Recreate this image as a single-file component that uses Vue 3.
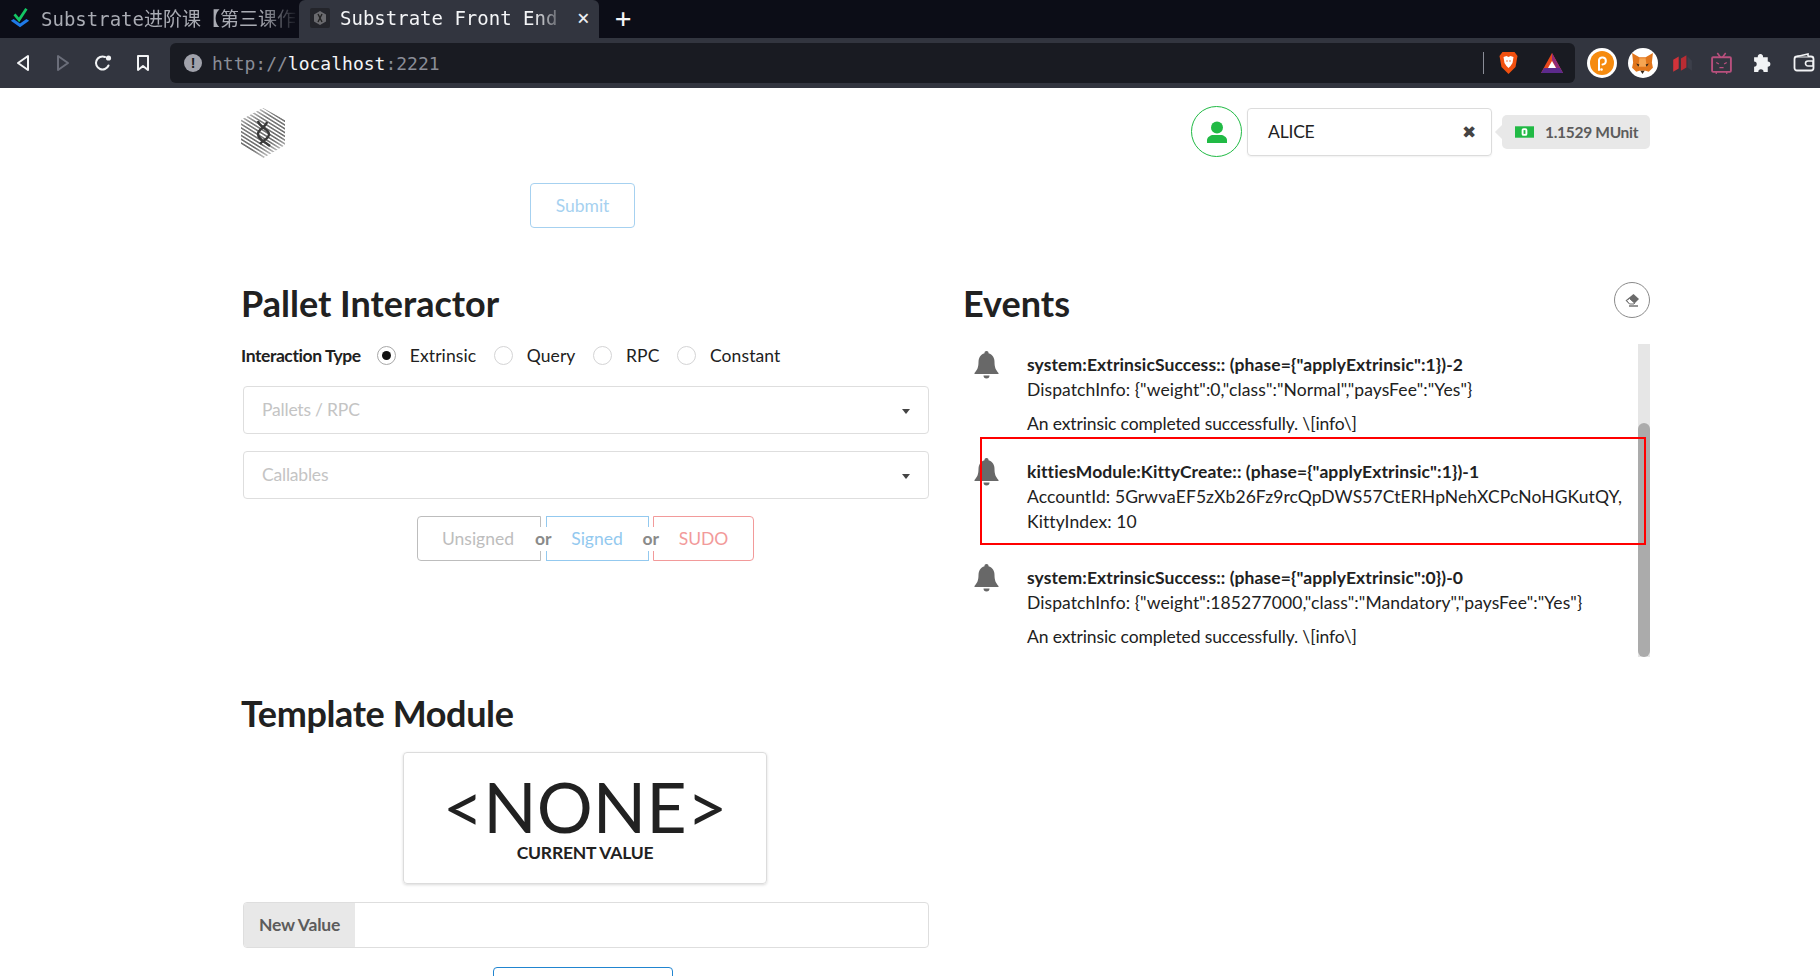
<template>
  <div class="browser">
    <div class="tabs">
      <div class="tab">
        <svg class="favicon" viewBox="0 0 24 24" width="22" height="22">
          <path d="M2 15l10 7 10-7-3-2-7 5-7-5z" fill="#1f7ae8" />
          <path d="M6 8l5 6 8-12" fill="none" stroke="#14c764" stroke-width="3" />
        </svg>
        <span class="tab-title">Substrate进阶课【第三课作</span>
      </div>
      <div class="tab active">
        <svg class="favicon" viewBox="0 0 20 20" width="20" height="20">
          <rect width="20" height="20" rx="2" fill="#24252b" />
          <path d="M10 3l6 3.500v7L10 17l-6-3.500v-7z" fill="#6a6a6e" />
          <path d="M8 6l4 8M12 6l-4 8" stroke="#222" stroke-width="1.400" />
        </svg>
        <span class="tab-title">Substrate Front End</span>
        <span class="tab-close">×</span>
      </div>
      <span class="tab-new">+</span>
    </div>
    <div class="toolbar">
      <svg class="tool" viewBox="0 0 20 20" width="20" height="20">
        <path d="M15 3v14L5 10z" fill="none" stroke="#f2f3f5" stroke-width="2" stroke-linejoin="round" />
      </svg>
      <svg class="tool" viewBox="0 0 20 20" width="20" height="20">
        <path d="M5 3v14l10-7z" fill="none" stroke="#6b6e7a" stroke-width="2" stroke-linejoin="round" />
      </svg>
      <svg class="tool" viewBox="0 0 20 20" width="20" height="20">
        <path d="M15.500 12.500A6.500 6.500 0 1 1 12 4" fill="none" stroke="#f2f3f5" stroke-width="2" stroke-linecap="round" />
        <circle cx="15.500" cy="5" r="2.600" fill="#f2f3f5" />
      </svg>
      <svg class="tool" viewBox="0 0 20 20" width="20" height="20">
        <path d="M5 3h10v14l-5-4-5 4z" fill="none" stroke="#f2f3f5" stroke-width="2" stroke-linejoin="round" />
      </svg>
      <div class="urlbar">
        <span class="info-dot">!</span>
        <span class="url"><span class="dim">http://</span>localhost<span class="dim">:2221</span></span>
        <span class="url-sep"></span>
        <svg viewBox="0 0 20 24" width="21" height="24">
          <path d="M4 1h12l3 4-2 11-7 7-7-7L1 5z" fill="#f1500f" />
          <path d="M5 6l3-1 2 1 2-1 3 1-1 6-2 3-2 2-2-2-2-3z" fill="#fff" />
          <path d="M8 10h1M11 10h1" stroke="#f1500f" stroke-width="1.400" />
        </svg>
        <svg class="bat" viewBox="0 0 24 22" width="24" height="22">
          <path d="M12 1L1 21h22z" fill="#e8481d" />
          <path d="M12 1l11 20h-4L12 8z" fill="#8f2b7a" />
          <path d="M1 21l3-5h16l3 5z" fill="#5c2a8c" />
          <path d="M12 9l4 7H8z" fill="#fff" />
        </svg>
      </div>
      <div class="extensions">
        <span class="ext"><span class="ext-circle">
          <svg viewBox="0 0 24 24" width="24" height="24">
            <circle cx="12" cy="12" r="12" fill="#f68b0f" />
            <path d="M9 19V9a3.500 3.500 0 1 1 3.500 4.500" fill="none" stroke="#fff" stroke-width="2" stroke-linecap="round" />
            <circle cx="11.500" cy="18.500" r="1.300" fill="#fff" />
          </svg>
        </span></span>
        <span class="ext"><span class="ext-circle">
          <svg viewBox="0 0 24 24" width="25" height="25">
            <path d="M2 2l7 4h6l7-4-1 9 1 5-4 4-3-1h-6l-3 1-4-4 1-5z" fill="#e2761b" />
            <path d="M9 7h6l1 8h-8z" fill="#f6a552" />
            <path d="M10 19h4l-2 3z" fill="#33261a" />
            <path d="M6 12l3 1-1 2zM18 12l-3 1 1 2z" fill="#33261a" />
          </svg>
        </span></span>
        <span class="ext ext-narrow">
          <svg viewBox="0 0 20 20" width="22" height="22">
            <path d="M2 7l5-3v11l-5 3z" fill="#d1333a" />
            <path d="M9 6l5-3v11l-5 3z" fill="#b92c33" />
            <path d="M15 4l4 4v9l-4-3z" fill="#3c3f4a" />
          </svg>
        </span>
        <span class="ext">
          <svg viewBox="0 0 22 22" width="23" height="23">
            <path d="M7 1l3 4M15 1l-3 4" stroke="#b9507e" stroke-width="1.500" />
            <rect x="2" y="5" width="18" height="14" rx="1" fill="none" stroke="#b9507e" stroke-width="1.800" />
            <path d="M6 10l2.500 1.500M16 10l-2.500 1.500M9 15h4M6 21v-2M16 21v-2" stroke="#b9507e" stroke-width="1.200" />
          </svg>
        </span>
        <span class="ext">
          <svg viewBox="0 0 20 20" width="21" height="21">
            <path d="M8 1a2.500 2.500 0 0 1 2.500 3H15v4a2.500 2.500 0 1 1 0 5v5h-4a2.500 2.500 0 1 0-5 0H2v-5a2.500 2.500 0 1 0 0-5V4h3.500A2.500 2.500 0 0 1 8 1z" fill="#f2f3f5" />
          </svg>
        </span>
        <span class="ext">
          <svg viewBox="0 0 22 20" width="22" height="20">
            <rect x="1.500" y="3.500" width="19" height="14" rx="2.500" fill="none" stroke="#f2f3f5" stroke-width="1.800" />
            <path d="M4 3.500l11-2.500v2.500M20 8h-5a2.500 2.500 0 0 0 0 5h5z" fill="#33363f" stroke="#f2f3f5" stroke-width="1.600" />
          </svg>
        </span>
      </div>
    </div>
  </div>

  <div class="page">
    <header class="top">
      <svg class="logo" viewBox="0 0 44 50" width="44" height="50">
        <defs>
          <pattern id="stripes" width="3.200" height="3.200" patternUnits="userSpaceOnUse" patternTransform="rotate(32)">
            <rect width="3.200" height="1.600" fill="#6e6e6e" />
          </pattern>
          <linearGradient id="fade" x1="0" y1="0" x2="0.400" y2="1">
            <stop offset="0" stop-color="#fff" stop-opacity="0.9" />
            <stop offset="0.35" stop-color="#fff" stop-opacity="0.1" />
            <stop offset="0.8" stop-color="#fff" stop-opacity="0" />
            <stop offset="1" stop-color="#fff" stop-opacity="0.5" />
          </linearGradient>
        </defs>
        <path d="M22 0l22 12v25L22 50 0 37V12z" fill="url(#stripes)" />
        <path d="M22 0l22 12v25L22 50 0 37V12z" fill="url(#fade)" />
        <path d="M17 13c1 6 11 8 11 13s-6 6-9 10M26 14c-1 5-9 7-9 12 0 5 6 7 12 12" fill="none" stroke="#3a3a3a" stroke-width="2.400" />
      </svg>
      <div class="account">
        <span class="avatar">
          <svg viewBox="0 0 20 22" width="20" height="22">
            <circle cx="10" cy="6.500" r="6" fill="#21ba45" />
            <path d="M0 22v-3c0-3 4-5 6-5h8c2 0 6 2 6 5v3z" fill="#21ba45" />
          </svg>
        </span>
        <div class="account-select">
          <span>ALICE</span>
          <span class="clear">✖</span>
        </div>
        <div class="balance">
          <svg viewBox="0 0 20 12" width="19" height="12">
            <rect width="20" height="12" fill="#21ba45" />
            <rect x="7" y="2" width="6" height="8" rx="2" fill="#fff" />
            <rect x="9" y="4" width="2" height="4" fill="#21ba45" />
          </svg>
          <span>1.1529 MUnit</span>
        </div>
      </div>
    </header>

    <button class="btn btn-submit">Submit</button>

    <div class="columns">
      <section>
        <h2>Pallet Interactor</h2>
        <div class="interaction">
          <strong>Interaction Type</strong>
          <label v-for="t in types" :key="t" class="radio">
            <span class="radio-dot" :class="{ checked: t === 'Extrinsic' }"></span>
            {{ t }}
          </label>
        </div>
        <div class="dropdown">Pallets / RPC<span class="caret"></span></div>
        <div class="dropdown">Callables<span class="caret"></span></div>
        <div class="tx-buttons">
          <button class="tx tx-first">Unsigned</button>
          <span class="or"><span>or</span></span>
          <button class="tx tx-blue">Signed</button>
          <span class="or"><span>or</span></span>
          <button class="tx tx-red">SUDO</button>
        </div>
      </section>

      <section>
        <div class="events-head">
          <h2>Events</h2>
          <span class="erase">
            <svg viewBox="0 0 16 14" width="16" height="14">
              <path d="M9.500 1l5.500 5-5 5H5.500L1.500 7.500z" fill="#6b6b6b" />
              <path d="M5.500 5.500l5 4.500-.5 1H5.500l-3-3.500z" fill="#fff" stroke="#6b6b6b" stroke-width="1" />
              <path d="M5 13h9" stroke="#6b6b6b" stroke-width="1.400" />
            </svg>
          </span>
        </div>
        <div class="feed">
          <div class="feed-list">
            <div v-for="ev in events" :key="ev.title" class="event" :class="{ 'no-note': !ev.note }">
              <svg class="bell" viewBox="0 0 24 28" width="25" height="28">
                <path d="M12 0a2 2 0 0 1 2 2.300C18 3.500 20 7 20 11c0 6 1.500 8 4 11v1H0v-1c2.500-3 4-5 4-11 0-4 2-7.500 6-8.700A2 2 0 0 1 12 0z" fill="#686868" />
                <path d="M9 24.500a3 3 0 0 0 6 0z" fill="#686868" />
              </svg>
              <div class="event-body">
                <div class="event-title">{{ ev.title }}</div>
                <div class="event-data">{{ ev.data }}</div>
                <div v-if="ev.note" class="event-note">{{ ev.note }}</div>
              </div>
            </div>
          </div>
          <div class="scrollbar"><div class="thumb"></div></div>
          <div class="annotation"></div>
        </div>
      </section>
    </div>

    <section class="template">
      <h2>Template Module</h2>
      <div class="statistic">
        <div class="stat-value">&lt;NONE&gt;</div>
        <div class="stat-label">CURRENT VALUE</div>
      </div>
      <div class="labeled-input">
        <span class="input-label">New Value</span>
        <span class="input-field"></span>
      </div>
      <button class="btn btn-store"></button>
    </section>
  </div>
</template>

<script setup>
const types = ['Extrinsic', 'Query', 'RPC', 'Constant']

const events = [
  {
    title: 'system:ExtrinsicSuccess:: (phase={"applyExtrinsic":1})-2',
    data: 'DispatchInfo: {"weight":0,"class":"Normal","paysFee":"Yes"}',
    note: 'An extrinsic completed successfully. \\[info\\]'
  },
  {
    title: 'kittiesModule:KittyCreate:: (phase={"applyExtrinsic":1})-1',
    data: 'AccountId: 5GrwvaEF5zXb26Fz9rcQpDWS57CtERHpNehXCPcNoHGKutQY, KittyIndex: 10'
  },
  {
    title: 'system:ExtrinsicSuccess:: (phase={"applyExtrinsic":0})-0',
    data: 'DispatchInfo: {"weight":185277000,"class":"Mandatory","paysFee":"Yes"}',
    note: 'An extrinsic completed successfully. \\[info\\]'
  }
]
</script>

<style>
html,
body {
  margin: 0;
  height: 976px;
  overflow: hidden;
  background: #fff;
}
</style>

<style scoped>
.browser {
  font-family: "DejaVu Sans Mono", "Noto Sans CJK SC", monospace;
}

.tabs {
  height: 38px;
  background: #0c0d17;
  display: flex;
  align-items: center;
}

.tab {
  width: 299px;
  height: 38px;
  box-sizing: border-box;
  padding: 0 0 3px 9px;
  display: flex;
  align-items: center;
  gap: 10px;
  color: #a9abb3;
  font-size: 19px;
}

.tab.active {
  width: 300px;
  padding-left: 11px;
  background: #32353f;
  border-radius: 6px 6px 0 0;
  color: #f4f5f7;
}

.favicon {
  flex: none;
}

.tab-title {
  flex: 1;
  white-space: nowrap;
  overflow: hidden;
  -webkit-mask-image: linear-gradient(to right, #000 85%, transparent 100%);
  mask-image: linear-gradient(to right, #000 85%, transparent 100%);
}

.tab-close {
  width: 22px;
  font-size: 21px;
  color: #eceef2;
}

.tab-new {
  margin-left: 16px;
  color: #f4f5f7;
  font-size: 27px;
  line-height: 1;
  padding-bottom: 4px;
}

.toolbar {
  height: 50px;
  box-sizing: border-box;
  padding-left: 13px;
  background: #32353f;
  display: flex;
  align-items: center;
  gap: 20px;
  overflow: hidden;
}

.tool {
  flex: none;
}

.urlbar {
  flex: none;
  width: 1405px;
  height: 40px;
  margin-left: -3px;
  box-sizing: border-box;
  padding: 0 11px 0 14px;
  background: #191b22;
  border-radius: 6px;
  display: flex;
  align-items: center;
}

.info-dot {
  width: 18px;
  height: 18px;
  border-radius: 50%;
  background: #a0a2ab;
  color: #191b22;
  font: bold 14px/18px "Liberation Sans", sans-serif;
  text-align: center;
}

.url {
  margin-left: 10px;
  font-size: 18px;
  color: #f4f5f7;
  flex: 1;
}

.dim {
  color: #8a8d97;
}

.url-sep {
  width: 1.500px;
  height: 22px;
  background: #8a8d97;
  margin-right: 14px;
}

.bat {
  margin-left: 21px;
}

.extensions {
  flex: none;
  display: flex;
  align-items: center;
  margin-left: -14px;
}

.ext {
  width: 41px;
  display: flex;
  justify-content: center;
}

.ext-narrow {
  width: 38px;
}

.ext-circle {
  width: 30px;
  height: 30px;
  border-radius: 50%;
  background: #fff;
  display: flex;
  align-items: center;
  justify-content: center;
}

.page {
  width: 1409px;
  margin-left: 241px;
  font-family: Lato, "Liberation Sans", sans-serif;
  font-size: 17.500px;
  color: #212121;
  letter-spacing: -0.2px;
}

.top {
  display: flex;
  justify-content: space-between;
  align-items: flex-start;
  padding-top: 18px;
}

.logo {
  margin-top: 2px;
}

.account {
  display: flex;
  align-items: center;
}

.avatar {
  width: 49px;
  height: 49px;
  border: 1.500px solid #21ba45;
  border-radius: 50%;
  display: flex;
  align-items: center;
  justify-content: center;
}

.account-select {
  width: 245px;
  height: 48px;
  margin-left: 5px;
  box-sizing: border-box;
  padding: 0 15px 0 20px;
  border: 1px solid #dcdcdc;
  border-radius: 4px;
  display: flex;
  align-items: center;
  justify-content: space-between;
  box-shadow: 0 1px 2px rgba(0, 0, 0, 0.06);
}

.clear {
  font-size: 17px;
  color: #444;
}

.balance {
  position: relative;
  width: 148px;
  height: 34px;
  margin-left: 10px;
  box-sizing: border-box;
  padding-left: 13px;
  background: #e8e8e8;
  border-radius: 5px;
  color: #5c5c5c;
  font-size: 15.500px;
  font-weight: 700;
  letter-spacing: -0.3px;
  display: flex;
  align-items: center;
  gap: 11px;
}

.balance::before {
  content: "";
  position: absolute;
  left: -5px;
  top: 12px;
  width: 10px;
  height: 10px;
  background: #e8e8e8;
  transform: rotate(45deg);
}

.btn {
  display: block;
  background: #fff;
  font: inherit;
  box-sizing: border-box;
}

.btn-submit {
  width: 105px;
  height: 45px;
  margin-left: 289px;
  margin-top: 25px;
  border: 1.500px solid #a6d1f0;
  border-radius: 4px;
  color: #a6d1f0;
}

.columns {
  display: grid;
  grid-template-columns: 688px 687px;
  column-gap: 34px;
  margin-top: 47px;
}

h2 {
  margin: 0;
  font-size: 36px;
  line-height: 56px;
  font-weight: 700;
  letter-spacing: 0;
}

.interaction {
  display: flex;
  align-items: center;
  height: 36px;
  margin-top: 6px;
}

.interaction strong {
  font-weight: 700;
  letter-spacing: -0.42px;
  margin-right: 16px;
}

.radio {
  display: flex;
  align-items: center;
  gap: 14px;
  margin-right: 17.500px;
  letter-spacing: 0.1px;
}

.radio-dot {
  width: 19px;
  height: 19px;
  box-sizing: border-box;
  border: 1px solid #d4d4d5;
  border-radius: 50%;
  position: relative;
}

.radio-dot.checked {
  border-color: #a8a8a8;
}

.radio-dot.checked::after {
  content: "";
  position: absolute;
  left: 4px;
  top: 4px;
  width: 9px;
  height: 9px;
  border-radius: 50%;
  background: #111;
}

.dropdown {
  position: relative;
  height: 48px;
  margin-left: 2px;
  margin-top: 13px;
  box-sizing: border-box;
  padding-left: 18px;
  border: 1px solid #dedede;
  border-radius: 4px;
  color: #c4c4c4;
  line-height: 45px;
}

.dropdown + .dropdown {
  margin-top: 17px;
}

.caret {
  position: absolute;
  right: 18px;
  top: 22px;
  border: 4.500px solid transparent;
  border-top: 5px solid #444;
  border-bottom: 0;
}

.tx-buttons {
  display: flex;
  align-items: center;
  margin-top: 17px;
  margin-left: 176px;
}

.tx {
  height: 45px;
  box-sizing: border-box;
  background: #fff;
  font: inherit;
  border: 1.500px solid;
}

.tx-first {
  width: 124px;
  padding-right: 8px;
  text-align: center;
  border-color: #bdbdbd;
  border-radius: 4px 0 0 4px;
  color: #bdbdbd;
}

.tx-blue {
  width: 103px;
  border-color: #93c9ef;
  color: #93c9ef;
}

.tx-red {
  width: 101px;
  border-color: #f29a9a;
  border-radius: 0 4px 4px 0;
  color: #f29a9a;
}

.or {
  width: 4.500px;
  position: relative;
  z-index: 1;
  display: flex;
  justify-content: center;
  color: #8a8a8a;
  font-weight: 700;
  letter-spacing: 0;
}

.or span {
  flex: none;
  padding: 0 4px;
  background: #fff;
  line-height: 24px;
}

.events-head {
  display: flex;
  justify-content: space-between;
  align-items: center;
}

.erase {
  width: 34px;
  height: 34px;
  border: 1.500px solid #8a8a8a;
  border-radius: 50%;
  display: flex;
  align-items: center;
  justify-content: center;
  margin-top: -7px;
}

.feed {
  position: relative;
  height: 313px;
  margin-top: 13px;
  padding-right: 18px;
  overflow: hidden;
}

.feed-list {
  padding-top: 8px;
}

.event {
  display: flex;
  padding-left: 11px;
  padding-bottom: 23px;
}

.event.no-note {
  padding-bottom: 31px;
}

.bell {
  flex: none;
  margin-top: -1px;
  margin-right: 28px;
}

.event-body {
  line-height: 25px;
  flex: 1;
}

.event-title {
  font-weight: 700;
  letter-spacing: 0.1px;
}

.event-data {
  letter-spacing: 0.09px;
}

.event-note {
  margin-top: 9px;
  letter-spacing: -0.12px;
}

.scrollbar {
  position: absolute;
  right: 0;
  top: 0;
  bottom: 0;
  width: 12px;
  background: #e6e6e6;
}

.thumb {
  position: absolute;
  left: 0;
  right: 0;
  top: 79px;
  bottom: 0;
  background: #ababab;
  border-radius: 6px;
}

.annotation {
  position: absolute;
  left: 17px;
  top: 93px;
  width: 666px;
  height: 108px;
  box-sizing: border-box;
  border: 2px solid #f00;
}

.template {
  width: 688px;
  margin-top: 28px;
}

.template h2 {
  letter-spacing: -0.39px;
}

.statistic {
  width: 364px;
  height: 132px;
  margin: 11px auto 0;
  box-sizing: border-box;
  padding-top: 18px;
  border: 1px solid #dcdcdc;
  border-radius: 4px;
  box-shadow: 0 1px 3px rgba(0, 0, 0, 0.15);
  text-align: center;
}

.stat-value {
  font-size: 70px;
  line-height: 70px;
  letter-spacing: 0;
}

.stat-label {
  margin-top: 1px;
  font-weight: 700;
  line-height: 22px;
}

.labeled-input {
  display: flex;
  height: 46px;
  margin-left: 2px;
  margin-top: 18px;
  box-sizing: border-box;
  border: 1px solid #dedede;
  border-radius: 4px;
  overflow: hidden;
}

.input-label {
  width: 111px;
  background: #e8e8e8;
  color: #5c5c5c;
  font-weight: 700;
  text-align: center;
  line-height: 44px;
}

.input-field {
  flex: 1;
}

.btn-store {
  width: 180px;
  height: 45px;
  margin: 19px 0 0 252px;
  border: 1.500px solid #2185d0;
  border-radius: 4px;
}
</style>
